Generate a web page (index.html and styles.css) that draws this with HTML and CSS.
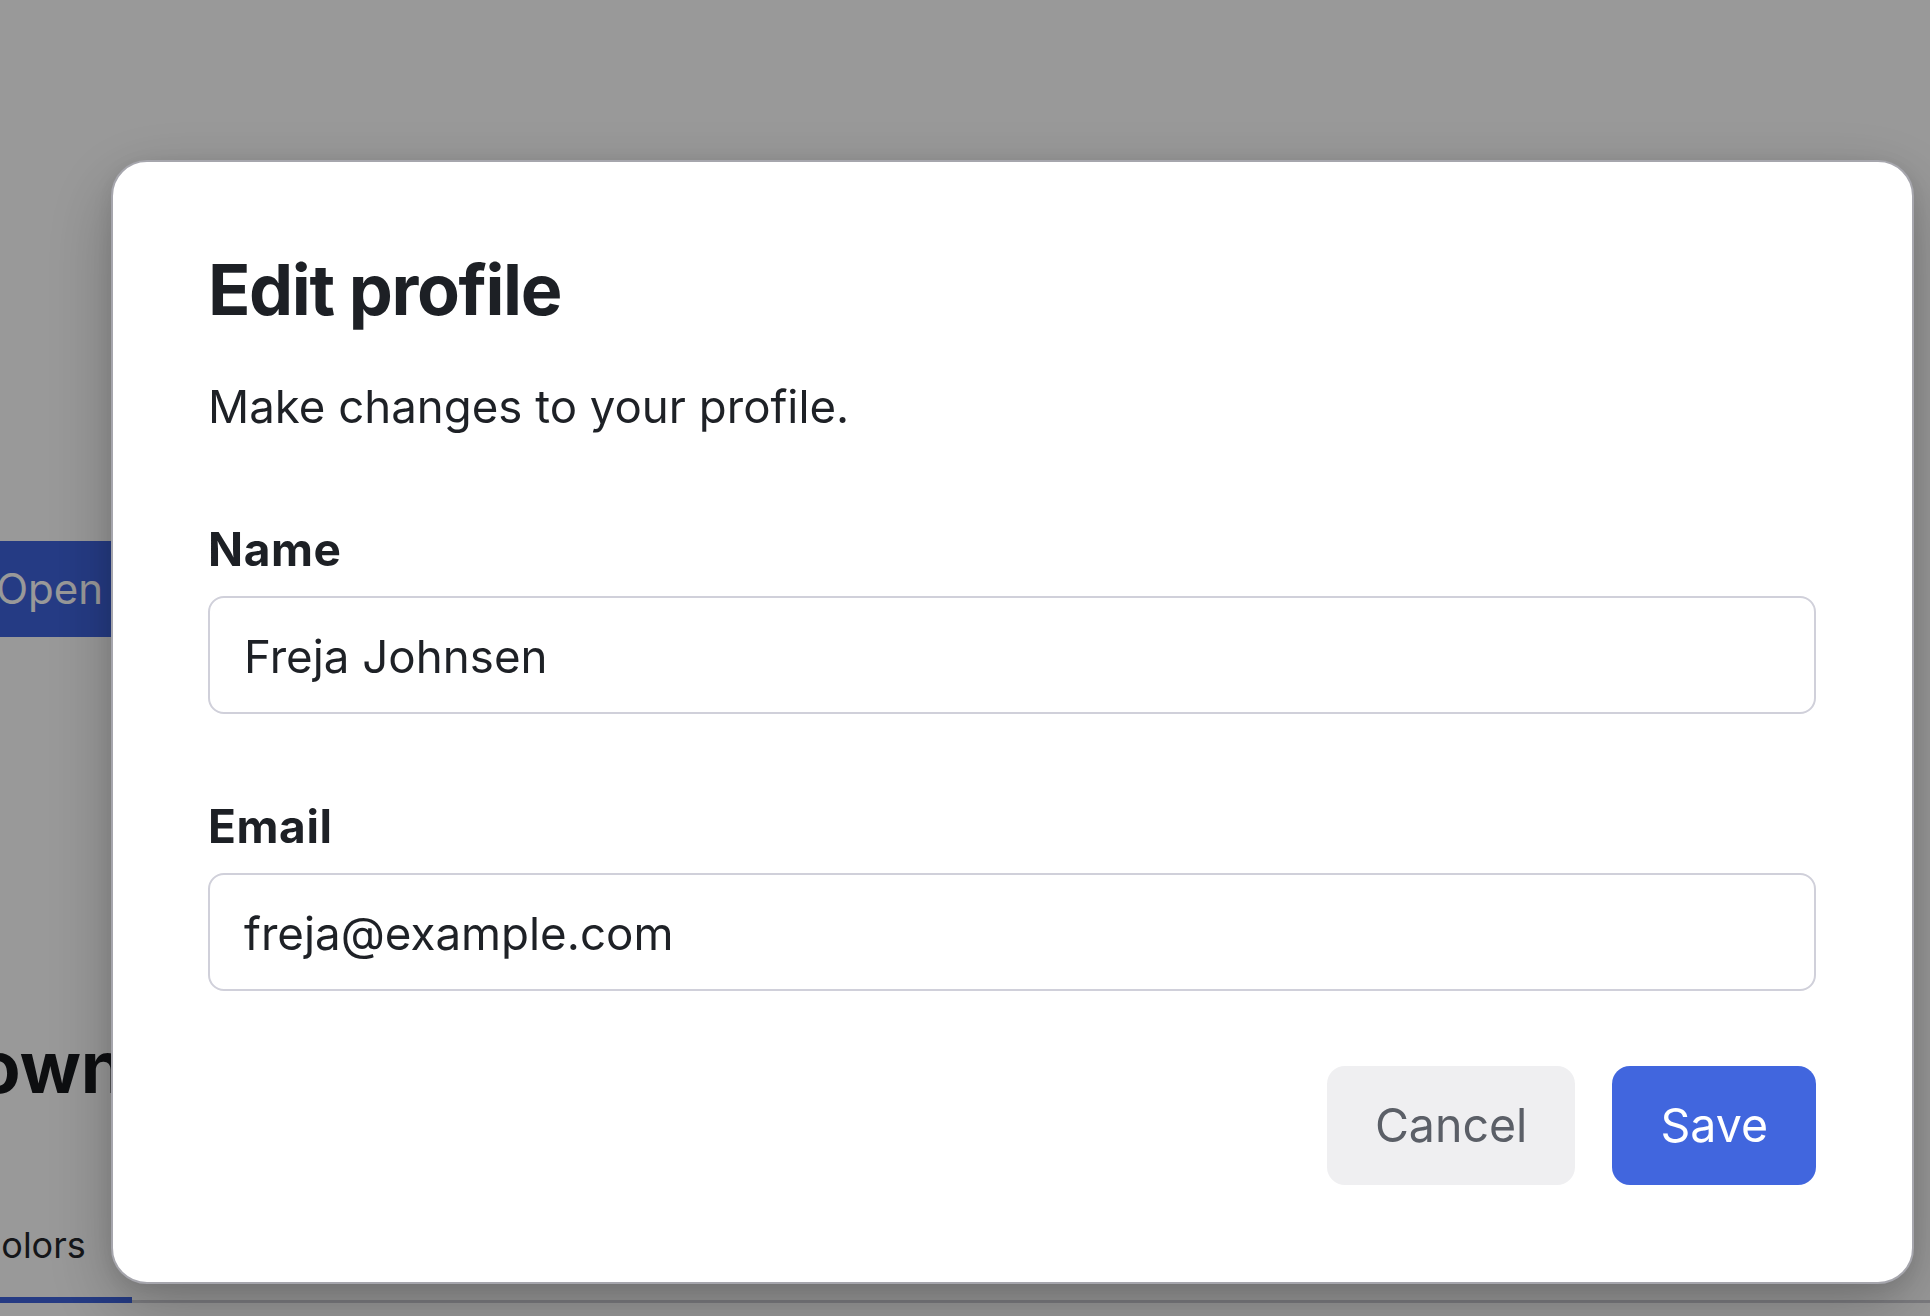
FILE: index.html
```html
<!DOCTYPE html>
<html lang="en">
<head>
<meta charset="utf-8">
<title>Edit profile</title>
<link rel="stylesheet" href="styles.css">
</head>
<body>
<main class="page">
  <div class="demo">
    <button class="open-btn" type="button">Open</button>
  </div>
  <h2 class="section-title">Dropdown menu</h2>
  <nav class="tabs">
    <span class="tab tab-active">Colors</span>
    <span class="tab">Sizes</span>
  </nav>
</main>
<div class="overlay"></div>
<div class="dialog" role="dialog" aria-labelledby="dlg-title">
  <h1 class="dialog-title" id="dlg-title">Edit profile</h1>
  <p class="dialog-desc">Make changes to your profile.</p>
  <form class="form">
    <label class="field">
      <span class="field-label">Name</span>
      <input class="field-input" type="text" value="Freja Johnsen">
    </label>
    <label class="field">
      <span class="field-label">Email</span>
      <input class="field-input" type="email" value="freja@example.com">
    </label>
    <div class="actions">
      <button type="button" class="btn btn-secondary">Cancel</button>
      <button type="button" class="btn btn-primary">Save</button>
    </div>
  </form>
</div>
</body>
</html>
```

FILE: styles.css
```css
* { box-sizing: border-box; }

html, body {
  margin: 0;
  padding: 0;
  width: 100%;
  height: 100%;
  overflow: hidden;
}

body {
  background: #ffffff;
  font-family: Inter, "Noto Sans", "Liberation Sans", sans-serif;
  color: #1e2024;
}

/* ---------- underlying page ---------- */
.page {
  display: flex;
  flex-direction: column;
  align-items: flex-start;
  padding-top: 541px;
}

.demo {
  display: flex;
}

.open-btn {
  margin-left: -38px;
  height: 96px;
  padding: 0 34px;
  border: none;
  border-radius: 12px;
  background: #3e63dd;
  color: #ffffff;
  font-family: inherit;
  font-size: 42px;
  line-height: 1;
}

.section-title {
  margin: 386px 0 0 -238px;
  font-size: 72px;
  line-height: 88px;
  font-weight: 700;
  color: #16181c;
  white-space: nowrap;
}

.tabs {
  align-self: stretch;
  display: flex;
  margin: 112px 0 0 0;
  border-bottom: 3px solid #cfcfd6;
}

.tab {
  padding: 0 46px 30px 50px;
  font-size: 36px;
  line-height: 44px;
  color: #23262b;
  margin-bottom: -3px;
  border-bottom: 6px solid transparent;
}

.tab-active {
  margin-left: -75px;
  border-bottom-color: #3e63dd;
}

/* ---------- overlay + dialog ---------- */
.overlay {
  position: fixed;
  inset: 0;
  background: rgba(0, 0, 0, 0.4);
}

.dialog {
  position: fixed;
  left: 111px;
  top: 160px;
  width: 1803px;
  padding: 83px 96px 97px 95px;
  background: #ffffff;
  border: 2px solid #a6a6ad;
  border-radius: 36px;
  box-shadow: 0 24px 70px rgba(0, 0, 0, 0.24), 0 6px 24px rgba(0, 0, 0, 0.1);
  display: flex;
  flex-direction: column;
}

.dialog-title {
  margin: 0;
  font-size: 70px;
  line-height: 90px;
  font-weight: 700;
  color: #1d2025;
  letter-spacing: -1.4px;
}

.dialog-desc {
  margin: 45px 0 0 0;
  font-size: 45.6px;
  line-height: 54px;
  color: #1e2126;
}

.form {
  display: flex;
  flex-direction: column;
  gap: 85px;
  margin-top: 88px;
}

.field {
  display: flex;
  flex-direction: column;
  gap: 20px;
}

.field-label {
  font-size: 46px;
  line-height: 54px;
  font-weight: 700;
  color: #1d2025;
  letter-spacing: 0.6px;
}

.field-input {
  display: block;
  width: 100%;
  height: 118px;
  padding: 3px 34px 0 34px;
  border: 2px solid #d0d0da;
  border-radius: 16px;
  background: #ffffff;
  font-family: inherit;
  font-size: 45.7px;
  color: #1e2126;
  outline: none;
}

.actions {
  display: flex;
  justify-content: flex-end;
  gap: 37px;
  margin-top: -10px;
}

.btn {
  height: 119px;
  padding: 0 48px;
  border: none;
  border-radius: 18px;
  font-family: inherit;
  font-size: 46.5px;
  line-height: 1;
}

.btn-secondary {
  background: #efeff1;
  color: #5b5f67;
}

.btn-primary {
  background: #4166de;
  color: #ffffff;
}
```
